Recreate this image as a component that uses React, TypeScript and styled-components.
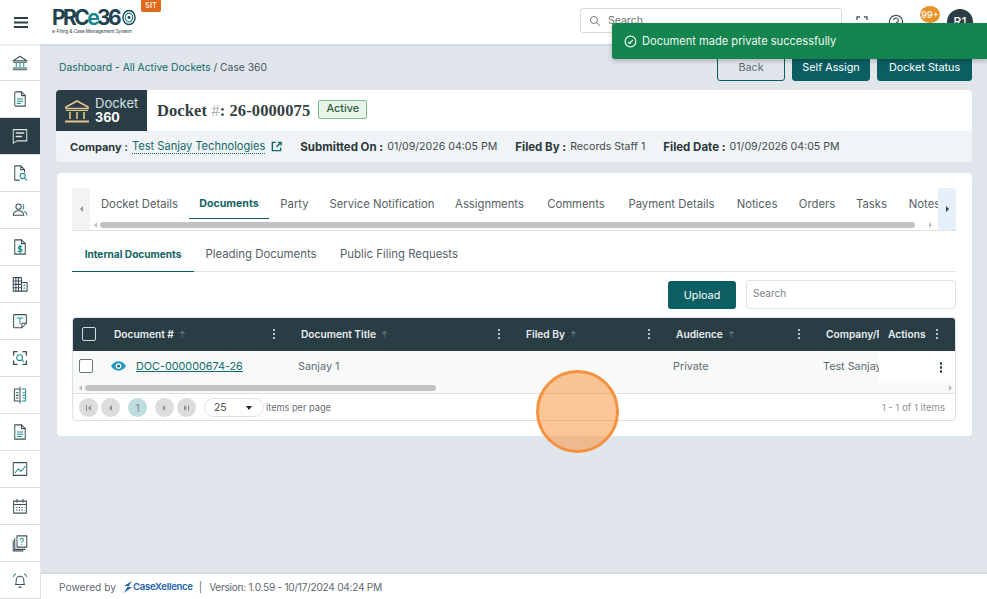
import React from "react";
import styled, { createGlobalStyle } from "styled-components";

const Global = createGlobalStyle`
  html, body { margin: 0; padding: 0; height: 100%; overflow: hidden; }
  body { font-family: "Inter", "Liberation Sans", sans-serif; background: #e0e5ec; color: #3c4a50; }
  * { box-sizing: border-box; }
`;

const DARK = "#2b3d44";
const TEAL = "#0b5f63";
const LINK = "#11696a";

const Page = styled.div`position: relative; width: 987px; height: 599px; display: flex; flex-direction: column; overflow: hidden;`;
const Header = styled.header`height: 44px; flex: none; background: #fff; display: flex; align-items: center; box-shadow: 0 1px 2px rgba(40,50,60,.12); position: relative; z-index: 2;`;
const Burger = styled.div`width: 41px; display: flex; justify-content: center; color: #2b3d44; margin-top: 1px;`;
const Logo = styled.div`margin-left: 11px; width: 89px; display: flex; flex-direction: column; margin-top: -3px;`;
const LogoMark = styled.div`display: flex; align-items: center; font: 700 21px/21px "Inter", sans-serif; letter-spacing: -2.6px; color: #20434f;`;
const LogoE = styled.span`color: #138a8c;`;
const LogoTag = styled.div`font: 500 4.7px/6px "Inter", sans-serif; color: #4d5b60; white-space: nowrap; letter-spacing: -.08px;`;
const Sit = styled.div`align-self: flex-start; width: 20px; height: 12px; background: #e0681a; color: #fff; border-radius: 0 0 2px 2px; font: 500 7.5px/12px "Inter", sans-serif; text-align: center;`;
const TopSearch = styled.div`margin-left: 419px; width: 262px; height: 25px; border: 1px solid #d8dcdf; border-radius: 3px; display: flex; align-items: center; padding-left: 8px; gap: 7px; font-size: 10.5px; color: #6c757a; margin-top: -3px;`;
const TopIcons = styled.div`display: flex; align-items: center; margin-left: 3px; color: #4a565b;`;
const TopIcon = styled.div`width: 34px; display: flex; justify-content: center;`;
const Badge = styled.div`width: 20px; height: 17px; margin-left: 7px; margin-top: -15px; border-radius: 50%; background: #e8922c; color: #fff; font: 500 9px/17px "Inter", sans-serif; text-align: center;`;
const Avatar = styled.div`width: 26px; height: 26px; margin-left: 7px; margin-top: -1px; border-radius: 50%; background: ${DARK}; color: #fff; font: 500 12px/26px "Inter", sans-serif; text-align: center;`;

const Body = styled.div`flex: 1; display: flex; min-height: 0;`;
const Sidebar = styled.nav`width: 41px; flex: none; background: #fff; border-right: 1px solid #e3e6ea; display: flex; flex-direction: column; padding-top: 1px;`;
const SideItem = styled.div<{ $active?: boolean; $first?: boolean }>`
  height: ${p => (p.$first ? 36 : 37)}px; display: flex; align-items: center; justify-content: center;
  background: ${p => (p.$active ? DARK : "#fff")}; color: ${p => (p.$active ? "#dfe5e6" : "#3d5057")};
  border-bottom: 1px solid #d9dde0; flex: none;
`;
const Column = styled.div`flex: 1; display: flex; flex-direction: column; min-width: 0;`;
const Main = styled.main`flex: 1; padding: 9px 15px 0 15px; display: flex; flex-direction: column; min-height: 0;`;
const Footer = styled.footer`height: 25px; flex: none; background: #fff; display: flex; align-items: center; padding-left: 18px; font-size: 10.2px; color: #5f6a6f; box-shadow: 0 -1px 2px rgba(40,50,60,.1);`;
const FooterBrand = styled.span`display: inline-flex; align-items: center; margin: 0 6px 0 7px; color: #1c62b0; font-weight: 600; font-size: 9.6px; letter-spacing: -.3px;`;
const FooterSep = styled.span`margin-right: 7px;`;
const Version = styled.span`letter-spacing: -.3px;`;

const TopRow = styled.div`height: 28px; display: flex; align-items: center; justify-content: space-between; margin-left: 3px; flex: none;`;
const Crumb = styled.div`font-size: 10.3px; color: #47565b;`;
const CrumbLink = styled.span`color: ${LINK};`;
const Buttons = styled.div`display: flex; gap: 7px;`;
const Btn = styled.div<{ $w: number; $outline?: boolean }>`
  width: ${p => p.$w}px; height: 28px; border-radius: 3px; display: flex; align-items: center; justify-content: center; font-size: 10.8px;
  background: ${p => (p.$outline ? "transparent" : TEAL)}; color: ${p => (p.$outline ? "#5a6a6e" : "#fff")};
  border: 1px solid ${TEAL};
`;

const DocketCard = styled.section`margin-top: 9px; border-radius: 4px; overflow: hidden; flex: none;`;
const DocketHead = styled.div`height: 41px; background: #fff; display: flex; align-items: center;`;
const DocketBlock = styled.div`width: 91px; height: 41px; background: ${DARK}; display: flex; align-items: center; padding-left: 9px; gap: 6px; color: #dfe9ea;`;
const DocketWord = styled.div`font-size: 13px; line-height: 15px; color: #d5e2e4;`;
const Docket360 = styled.div`font-weight: 700; color: #fff; font-size: 12.6px; line-height: 14px;`;
const DocketTitle = styled.div`margin-left: 10px; font: 700 16.5px/20px "Liberation Serif", serif; color: #33403f; letter-spacing: .1px;`;
const Hash = styled.span`color: #a9b1b3; font-weight: 400;`;
const ActiveTag = styled.div`margin-left: 8px; width: 49px; height: 19px; border: 1px solid #7dbb8d; border-radius: 2px; background: #e7f4ea; color: #2f5a3f; font-size: 10.8px; font-weight: 500; line-height: 16px; text-align: center; margin-top: -2px;`;
const DocketMeta = styled.div`height: 31px; background: #f1f4f6; display: flex; align-items: center; padding-left: 14px; font-size: 10.6px; color: #3f4a4e;`;
const MetaItem = styled.div`display: flex; align-items: center; margin-right: 18px; white-space: nowrap;`;
const MetaLabel = styled.b<{ $tight?: boolean }>`font-weight: 700; font-size: ${p => (p.$tight ? 11 : 11.5)}px; color: #2c373b; margin-right: 4px;`;
const CompanyLink = styled.span`color: ${LINK}; border-bottom: 1px dotted ${LINK}; margin-right: 6px; line-height: 13px; font-size: 11.1px;`;

const Card = styled.section`margin-top: 11px; margin-left: 1px; height: 263px; background: #fff; border-radius: 4px; padding: 15px 16px 0 15px; flex: none;`;
const TabsWrap = styled.div`position: relative; height: 43px; border-bottom: 1px solid #dfe3e5; display: flex;`;
const Scroller = styled.div<{ $right?: boolean }>`
  width: 18px; height: 42px; flex: none; display: flex; align-items: center; justify-content: center;
  background: ${p => (p.$right ? "#e6f0fa" : "#f2f3f4")}; border-radius: 3px 3px 0 0;
`;
const TabsInner = styled.div`flex: 1; min-width: 0; display: flex; flex-direction: column;`;
const TabList = styled.div`height: 33px; display: flex; overflow: hidden; padding-left: 0;`;
const Tab = styled.div<{ $active?: boolean; $w: number }>`
  flex: none; width: ${p => p.$w}px; height: 31px; text-align: center; line-height: 32px; white-space: nowrap;
  font-size: ${p => (p.$active ? 10.6 : 11.3)}px; font-weight: ${p => (p.$active ? 700 : 400)}; color: ${p => (p.$active ? "#0f6466" : "#566165")};
  border-bottom: ${p => (p.$active ? `1px solid ${TEAL}` : "none")};
`;
const HBar = styled.div`height: 7px; display: flex; align-items: center; gap: 3px; padding: 0 6px 0 4px; background: #fff;`;
const Thumb = styled.div<{ $w: number }>`width: ${p => p.$w}px; height: 6px; border-radius: 3px; background: #c3c3c3; flex: none;`;
const Arrow = styled.div<{ $right?: boolean; $c?: string; $s?: number }>`
  width: 0; height: 0; flex: none; border-top: ${p => p.$s ?? 3}px solid transparent; border-bottom: ${p => p.$s ?? 3}px solid transparent;
  ${p => (p.$right ? `border-left: ${p.$s ?? 3}px solid ${p.$c ?? "#b9b9b9"};` : `border-right: ${p.$s ?? 3}px solid ${p.$c ?? "#b9b9b9"};`)}
`;
const Spacer = styled.div`flex: 1;`;

const SubTabs = styled.div`height: 41px; display: flex; align-items: flex-end; border-bottom: 1px solid #dfe3e5; margin-top: 0;`;
const SubTab = styled.div<{ $active?: boolean; $w: number }>`
  width: ${p => p.$w}px; height: 37px; line-height: 38px; text-align: center; font-size: ${p => (p.$active ? 10.1 : 11.4)}px; white-space: nowrap; margin-bottom: -1px;
  font-weight: ${p => (p.$active ? 700 : 400)}; color: ${p => (p.$active ? "#0f6466" : "#566165")};
  border-bottom: ${p => (p.$active ? `1px solid ${TEAL}` : "none")};
`;
const Tools = styled.div`height: 45px; display: flex; justify-content: flex-end; padding-top: 8px; gap: 10px;`;
const Upload = styled.div`width: 68px; height: 28px; margin-top: 1px; background: ${TEAL}; color: #fff; border-radius: 3px; font-size: 10.8px; display: flex; align-items: center; justify-content: center;`;
const SearchBox = styled.div`width: 210px; height: 29px; border: 1px solid #dfe3e5; border-radius: 3px; font-size: 10px; color: #7b8488; padding-left: 6px; line-height: 25px;`;

const Grid = styled.div`border: 1px solid #dde1e3; border-radius: 4px; height: 104px; overflow: hidden;`;
const GridHead = styled.div`height: 34px; margin: -1px -1px 0; background: ${DARK}; display: grid; grid-template-columns: 31px 186px 225px 150px 150px 65px 77px; align-items: center; color: #e8eeef; font-size: 10.2px; font-weight: 600;`;
const GridRow = styled.div`height: 32px; background: #f8fafa; display: grid; grid-template-columns: 30px 186px 225px 150px 150px 65px 76px; align-items: center; font-size: 10.8px; color: #5f6a6e;`;
const HeadCheck = styled.div`display: flex; align-items: center; height: 100%;`;
const HeadCell = styled.div<{ $pad?: number; $end?: number }>`display: flex; align-items: center; padding-left: ${p => p.$pad ?? 12}px; padding-right: ${p => p.$end ?? 14}px; white-space: nowrap; overflow: hidden; height: 100%;`;
const SortUp = styled.span`color: #75878c; font-size: 8px; margin-left: 5px; font-weight: 400;`;
const Kebab = styled.div<{ $c?: string }>`margin-left: auto; display: flex; flex-direction: column; gap: 1.5px; flex: none;
  & > i { display: block; width: 2.5px; height: 2.5px; border-radius: 50%; background: ${p => p.$c ?? "#e8eeef"}; }
`;
const Check = styled.div<{ $dark?: boolean }>`flex: none; width: 14px; height: 14px; border-radius: 2px; border: 1px solid ${p => (p.$dark ? "#d5dcdd" : "#6b7478")}; margin-left: ${p => (p.$dark ? 10 : 6)}px; background: ${p => (p.$dark ? "transparent" : "#fff")};`;
const RowCell = styled.div<{ $pad?: number }>`padding-left: ${p => p.$pad ?? 9}px; white-space: nowrap; overflow: hidden; display: flex; align-items: center; height: 100%; padding-bottom: 2px;`;
const DocLink = styled.span`color: ${LINK}; text-decoration: underline; margin-left: 10px;`;
const ActionCell = styled.div`background: #fff; height: 31px; display: flex; align-items: center; padding-right: 13px; margin-top: 1px;`;
const GridBar = styled.div`height: 11px; background: #f8fafa; display: flex; align-items: center; gap: 3px; padding: 0 3px 0 6px; border-bottom: 1px solid #dde1e3;`;
const Pager = styled.div`height: 27px; display: flex; align-items: center; padding: 0 10px 0 3px; font-size: 9.2px; color: #667074;`;
const PageBtn = styled.div<{ $on?: boolean; $ml?: number }>`width: 19px; height: 19px; border-radius: 50%; flex: none; margin-left: ${p => p.$ml ?? 3}px; background: ${p => (p.$on ? "#bfdcde" : "#dcdcdc")}; color: #5c8a8e; display: flex; align-items: center; justify-content: center; font-size: 10px; gap: 1px;`;
const Bar = styled.i`display: block; width: 1px; height: 6px; background: #8f8f8f;`;
const PageSize = styled.div`width: 60px; height: 19px; margin-left: 8px; border: 1px solid #dfe3e5; border-radius: 10px; display: flex; align-items: center; justify-content: space-between; padding: 0 11px 0 9px; font-size: 10.4px; color: #3f4a4e; flex: none;`;
const Down = styled.i`display: block; width: 0; height: 0; border-left: 3.5px solid transparent; border-right: 3.5px solid transparent; border-top: 4px solid #222;`;
const PerPage = styled.span`margin-left: 2px;`;
const Count = styled.span`margin-left: auto; font-size: 9.6px; color: #8a9296;`;

const Toast = styled.div`position: absolute; top: 23px; right: 0; width: 375px; height: 36px; background: #14854f; border-radius: 3px 0 0 3px; color: #eef7f1; display: flex; align-items: center; padding-left: 12px; gap: 5px; font-size: 11.1px; z-index: 5; box-shadow: 0 2px 5px rgba(0,0,0,.22);`;
const Spot = styled.div`position: absolute; left: 536px; top: 370px; width: 83px; height: 83px; border-radius: 50%; border: 3px solid #f6923f; background: rgba(250,141,45,.5); z-index: 6;`;

const S = { fill: "none", stroke: "currentColor", strokeWidth: 1.35, strokeLinecap: "round" as const, strokeLinejoin: "round" as const };
const A = { fill: "none", stroke: "#1d8f8f", strokeWidth: 1.35, strokeLinecap: "round" as const, strokeLinejoin: "round" as const };
const Ico: React.FC<{ children: React.ReactNode; size?: number }> = ({ children, size = 18 }) => (
  <svg width={size} height={size} viewBox="0 0 24 24">{children}</svg>
);

const icons: React.ReactNode[] = [
  <Ico key="0"><path {...S} d="M3 9 12 3l9 6H3Z" /><path {...S} d="M3 11h18M3 21h18M3 18.6h18" /><path {...A} d="M7 12v5M12 12v5M17 12v5" /></Ico>,
  <Ico key="1"><path {...S} d="M6 2.5h8l5 5v14H6a1.5 1.5 0 0 1-1-1.5V4a1.5 1.5 0 0 1 1-1.5Z" /><path {...S} d="M14 2.5v5h5" /><path {...A} d="M8.5 12h7M8.5 15h7M8.5 18h4" /></Ico>,
  <Ico key="2"><path {...S} d="M3 3.5h18v15H8l-5 3v-18Z" /><path {...S} strokeWidth={2} d="M7 8h10M7 12.5h7" /></Ico>,
  <Ico key="3"><path {...S} d="M13 2.5H5v19h6M13 2.5l5 5v3M13 2.5v5h5" /><circle {...A} cx="15.5" cy="16" r="3.5" /><path {...A} d="m18 18.5 3 3" /></Ico>,
  <Ico key="4"><circle {...S} cx="10" cy="7.5" r="3.5" /><path {...S} d="M3 19c.3-4 3-6 7-6s6.7 2 7 6H3Z" /><path {...A} d="M15.5 4.2c2 .8 2 5.8 0 6.6M18 14c2 .8 3.2 2.6 3.3 5" /></Ico>,
  <Ico key="5"><path {...S} d="M6 2.5h8l5 5v14H5v-19h1Z" /><path {...S} d="M14 2.5v5h5" /><path {...A} strokeWidth={1.7} d="M14.5 11.5h-3a1.5 1.5 0 0 0 0 3.2h1.5a1.5 1.5 0 0 1 0 3.2H9.5M12 10v9.5" /></Ico>,
  <Ico key="6"><path {...S} d="M3 3.5h11v18H3zM14 10h7.5v11.5H14" /><path {...S} d="M3 8h11M3 12.5h11M3 17h11M6.5 3.5v18M10 3.5v18" /><path {...A} d="M17 13.5h1.5M17 17.5h1.5" /></Ico>,
  <Ico key="7"><path {...S} d="M4.5 3.5h15a1 1 0 0 1 1 1V15l-6 6h-10a1 1 0 0 1-1-1V4.5a1 1 0 0 1 1-1Z" /><path {...S} d="M20.5 15H15a.5.5 0 0 0-.5.5V21" /><path {...A} d="M8 8h8M12 8v8" /></Ico>,
  <Ico key="8"><path {...S} strokeWidth={1.8} d="M3.5 8V3.5H8M16 3.5h4.5V8M20.5 16v4.5H16M8 20.5H3.5V16" /><circle {...A} cx="11.5" cy="11.5" r="3.8" /><path {...A} d="m14.5 14.5 2.5 2.5" /></Ico>,
  <Ico key="9"><path {...S} d="M12 1.5v21M12 4H4.5v16H12M7 9h2.5M7 12.5h2.5M7 16h2.5" /><path {...A} d="M14.5 4h5v16h-5M16 9h2M16 12.5h2M16 16h2" /></Ico>,
  <Ico key="10"><path {...S} d="M6 2.5h8l5 5v14H5v-19h1Z" /><path {...S} d="M14 2.5v5h5" /><path {...A} d="M8.5 12h7M8.5 15h7M8.5 18h5" /></Ico>,
  <Ico key="11"><path {...S} d="M3 3.5h18v17H3z" /><path {...A} d="m5.5 17 4-5 4 3 5.5-6.5" /></Ico>,
  <Ico key="12"><path {...S} d="M3.5 5.5h17v16h-17zM3.5 10h17M8 3v4M16 3v4" /><path {...S} strokeDasharray="1.5 2" strokeLinecap="butt" d="M7 14h11M7 17.5h11" /></Ico>,
  <Ico key="13"><path {...S} d="M8 2.5h13v15H8z" /><path {...S} d="M5 6v14.5h14" /><path {...S} d="M3 9v13.5h13" /><path {...A} d="M12.5 7.5a2 2 0 1 1 2.8 2c-.6.4-.8.8-.8 1.7M14.5 13.8v.2" /></Ico>,
  <Ico key="14"><path {...S} d="M6 18c1-1.5 1-3.5 1-6a5 5 0 0 1 10 0c0 2.5 0 4.5 1 6H6Z" /><path {...S} d="M10.5 21.5h3" /><path {...A} d="M3.5 7.5c.5-1.5 1.2-2.5 2.5-3.5M20.5 7.5c-.5-1.5-1.2-2.5-2.5-3.5" /></Ico>,
];

export default function App() {
  return (
    <Page>
      <Global />
      <Header>
        <Burger>
          <svg width="14" height="11" viewBox="0 0 14 11"><path d="M0 1h14M0 5.5h14M0 10h14" stroke="currentColor" strokeWidth="1.8" /></svg>
        </Burger>
        <Logo>
          <LogoMark>
            PRC<LogoE>e</LogoE>36
            <svg width="14" height="17" viewBox="0 0 15 17" style={{ marginLeft: 2.5 }}>
              <ellipse cx="7.5" cy="8.5" rx="6.5" ry="7.5" fill="none" stroke="#20434f" strokeWidth="1.5" />
              <ellipse cx="7.5" cy="8.5" rx="4" ry="4.7" fill="none" stroke="#138a8c" strokeWidth="1.2" />
              <circle cx="7.5" cy="8.5" r="1.6" fill="#20434f" />
            </svg>
          </LogoMark>
          <LogoTag>e-Filing &amp; Case Management System</LogoTag>
        </Logo>
        <Sit>SIT</Sit>
        <TopSearch>
          <svg width="12" height="12" viewBox="0 0 24 24"><circle cx="10" cy="10" r="7" fill="none" stroke="#777" strokeWidth="2" /><path d="m15 15 7 7" stroke="#777" strokeWidth="2" /></svg>
          Search
        </TopSearch>
        <TopIcons>
          <TopIcon>
            <svg width="12" height="12" viewBox="0 0 12 12"><path d="M1 4V1h3M8 1h3v3M11 8v3H8M4 11H1V8" fill="none" stroke="currentColor" strokeWidth="1.3" /></svg>
          </TopIcon>
          <TopIcon>
            <svg width="16" height="16" viewBox="0 0 24 24"><circle cx="12" cy="12" r="10" fill="none" stroke="currentColor" strokeWidth="1.8" /><path d="M8.5 9.5a3.5 3.5 0 1 1 5 3.2c-1 .5-1.5 1.2-1.5 2.3M12 18v.3" fill="none" stroke="currentColor" strokeWidth="1.8" /></svg>
          </TopIcon>
          <Badge>99+</Badge>
          <Avatar>R1</Avatar>
        </TopIcons>
      </Header>
      <Body>
        <Sidebar>
          {icons.map((ic, i) => (
            <SideItem key={i} $first={i === 0} $active={i === 2}>{ic}</SideItem>
          ))}
        </Sidebar>
        <Column>
          <Main>
            <TopRow>
              <Crumb><CrumbLink>Dashboard - All Active Dockets</CrumbLink> / Case 360</Crumb>
              <Buttons>
                <Btn $w={68} $outline>Back</Btn>
                <Btn $w={78}>Self Assign</Btn>
                <Btn $w={95}>Docket Status</Btn>
              </Buttons>
            </TopRow>
            <DocketCard>
              <DocketHead>
                <DocketBlock>
                  <svg width="24" height="24" viewBox="0 0 24 24"><path d="M12 2 1 8v1.5h22V8L12 2Z" fill="none" stroke="#e3c68f" strokeWidth="1.6" /><path d="M1 11.5h22" stroke="#e3c68f" strokeWidth="1" /><path d="M5 13v7M12 13v7M19 13v7" stroke="#e3c68f" strokeWidth="1.6" /><path d="M0 22.5h24" stroke="#e3c68f" strokeWidth="1.8" /></svg>
                  <div>
                    <DocketWord>Docket</DocketWord>
                    <Docket360>360</Docket360>
                  </div>
                </DocketBlock>
                <DocketTitle>Docket <Hash>#</Hash>: 26-0000075</DocketTitle>
                <ActiveTag>Active</ActiveTag>
              </DocketHead>
              <DocketMeta>
                <MetaItem>
                  <MetaLabel $tight>Company :</MetaLabel>
                  <CompanyLink>Test Sanjay Technologies</CompanyLink>
                  <svg width="11" height="11" viewBox="0 0 12 12"><path d="M5 1.5H1.5v9h9V7" fill="none" stroke={LINK} strokeWidth="1.6" /><path d="M6 6.5 10.5 2M7.5 1.5h3.5V5" fill="none" stroke={LINK} strokeWidth="1.6" /></svg>
                </MetaItem>
                <MetaItem><MetaLabel>Submitted On :</MetaLabel>01/09/2026 04:05 PM</MetaItem>
                <MetaItem><MetaLabel>Filed By :</MetaLabel>Records Staff 1</MetaItem>
                <MetaItem><MetaLabel>Filed Date :</MetaLabel>01/09/2026 04:05 PM</MetaItem>
              </DocketMeta>
            </DocketCard>
            <Card>
              <TabsWrap>
                <Scroller><Arrow $c="#8f9598" /></Scroller>
                <TabsInner>
                  <TabList>
                    <Tab $w={99}>Docket Details</Tab>
                    <Tab $w={80} $active>Documents</Tab>
                    <Tab $w={51}>Party</Tab>
                    <Tab $w={124}>Service Notification</Tab>
                    <Tab $w={91}>Assignments</Tab>
                    <Tab $w={82}>Comments</Tab>
                    <Tab $w={109}>Payment Details</Tab>
                    <Tab $w={62}>Notices</Tab>
                    <Tab $w={58}>Orders</Tab>
                    <Tab $w={51}>Tasks</Tab>
                    <Tab $w={55}>Notes</Tab>
                  </TabList>
                  <HBar>
                    <Arrow />
                    <Thumb $w={815} />
                    <Spacer />
                    <Arrow $right />
                  </HBar>
                </TabsInner>
                <Scroller $right><Arrow $right $c="#2b3d44" /></Scroller>
              </TabsWrap>
              <SubTabs>
                <SubTab $w={122} $active>Internal Documents</SubTab>
                <SubTab $w={134}>Pleading Documents</SubTab>
                <SubTab $w={142}>Public Filing Requests</SubTab>
              </SubTabs>
              <Tools>
                <Upload>Upload</Upload>
                <SearchBox>Search</SearchBox>
              </Tools>
              <Grid>
                <GridHead>
                  <HeadCheck><Check $dark /></HeadCheck>
                  <HeadCell $pad={11}>Document #<SortUp>↑</SortUp><Kebab><i /><i /><i /></Kebab></HeadCell>
                  <HeadCell>Document Title<SortUp>↑</SortUp><Kebab><i /><i /><i /></Kebab></HeadCell>
                  <HeadCell>Filed By<SortUp>↑</SortUp><Kebab><i /><i /><i /></Kebab></HeadCell>
                  <HeadCell>Audience<SortUp>↑</SortUp><Kebab><i /><i /><i /></Kebab></HeadCell>
                  <HeadCell $end={0}>Company/Party</HeadCell>
                  <HeadCell $pad={9} $end={18}>Actions<Kebab><i /><i /><i /></Kebab></HeadCell>
                </GridHead>
                <GridRow>
                  <RowCell $pad={0}><Check /></RowCell>
                  <RowCell $pad={8}>
                    <svg width="15" height="10" viewBox="0 0 16 10"><path d="M0 5c2-3 5-5 8-5s6 2 8 5c-2 3-5 5-8 5S2 8 0 5Z" fill="#2596c4" /><circle cx="8" cy="5" r="3" fill="#fff" /><circle cx="8" cy="5" r="1.7" fill="#1f6f90" /></svg>
                    <DocLink>DOC-000000674-26</DocLink>
                  </RowCell>
                  <RowCell>Sanjay 1</RowCell>
                  <RowCell />
                  <RowCell>Private</RowCell>
                  <RowCell>Test Sanjay Technologies</RowCell>
                  <ActionCell><Kebab $c="#2b3d44"><i /><i /><i /></Kebab></ActionCell>
                </GridRow>
                <GridBar>
                  <Arrow />
                  <Thumb $w={351} />
                  <Spacer />
                  <Arrow $right />
                </GridBar>
                <Pager>
                  <PageBtn><Bar /><Arrow $c="#8f8f8f" /></PageBtn>
                  <PageBtn><Arrow $c="#8f8f8f" /></PageBtn>
                  <PageBtn $on $ml={8}>1</PageBtn>
                  <PageBtn $ml={8}><Arrow $right $c="#8f8f8f" /></PageBtn>
                  <PageBtn><Arrow $right $c="#8f8f8f" /><Bar /></PageBtn>
                  <PageSize>25<Down /></PageSize>
                  <PerPage>items per page</PerPage>
                  <Count>1 - 1 of 1 items</Count>
                </Pager>
              </Grid>
            </Card>
          </Main>
          <Footer>
            Powered by
            <FooterBrand>
              <svg width="10" height="12" viewBox="0 0 10 12"><path d="M9 0 1 5h4L1 12l8-6H5l4-6Z" fill="#1c62b0" /></svg>
              CaseXellence
            </FooterBrand>
            <FooterSep>|</FooterSep>
            <Version>Version: 1.0.59 - 10/17/2024 04:24 PM</Version>
          </Footer>
        </Column>
      </Body>
      <Toast>
        <svg width="13" height="13" viewBox="0 0 24 24"><circle cx="12" cy="12" r="10" fill="none" stroke="#fff" strokeWidth="2" /><path d="m7.5 12.5 3 3 6-6.5" fill="none" stroke="#fff" strokeWidth="2" /></svg>
        Document made private successfully
      </Toast>
      <Spot />
    </Page>
  );
}
